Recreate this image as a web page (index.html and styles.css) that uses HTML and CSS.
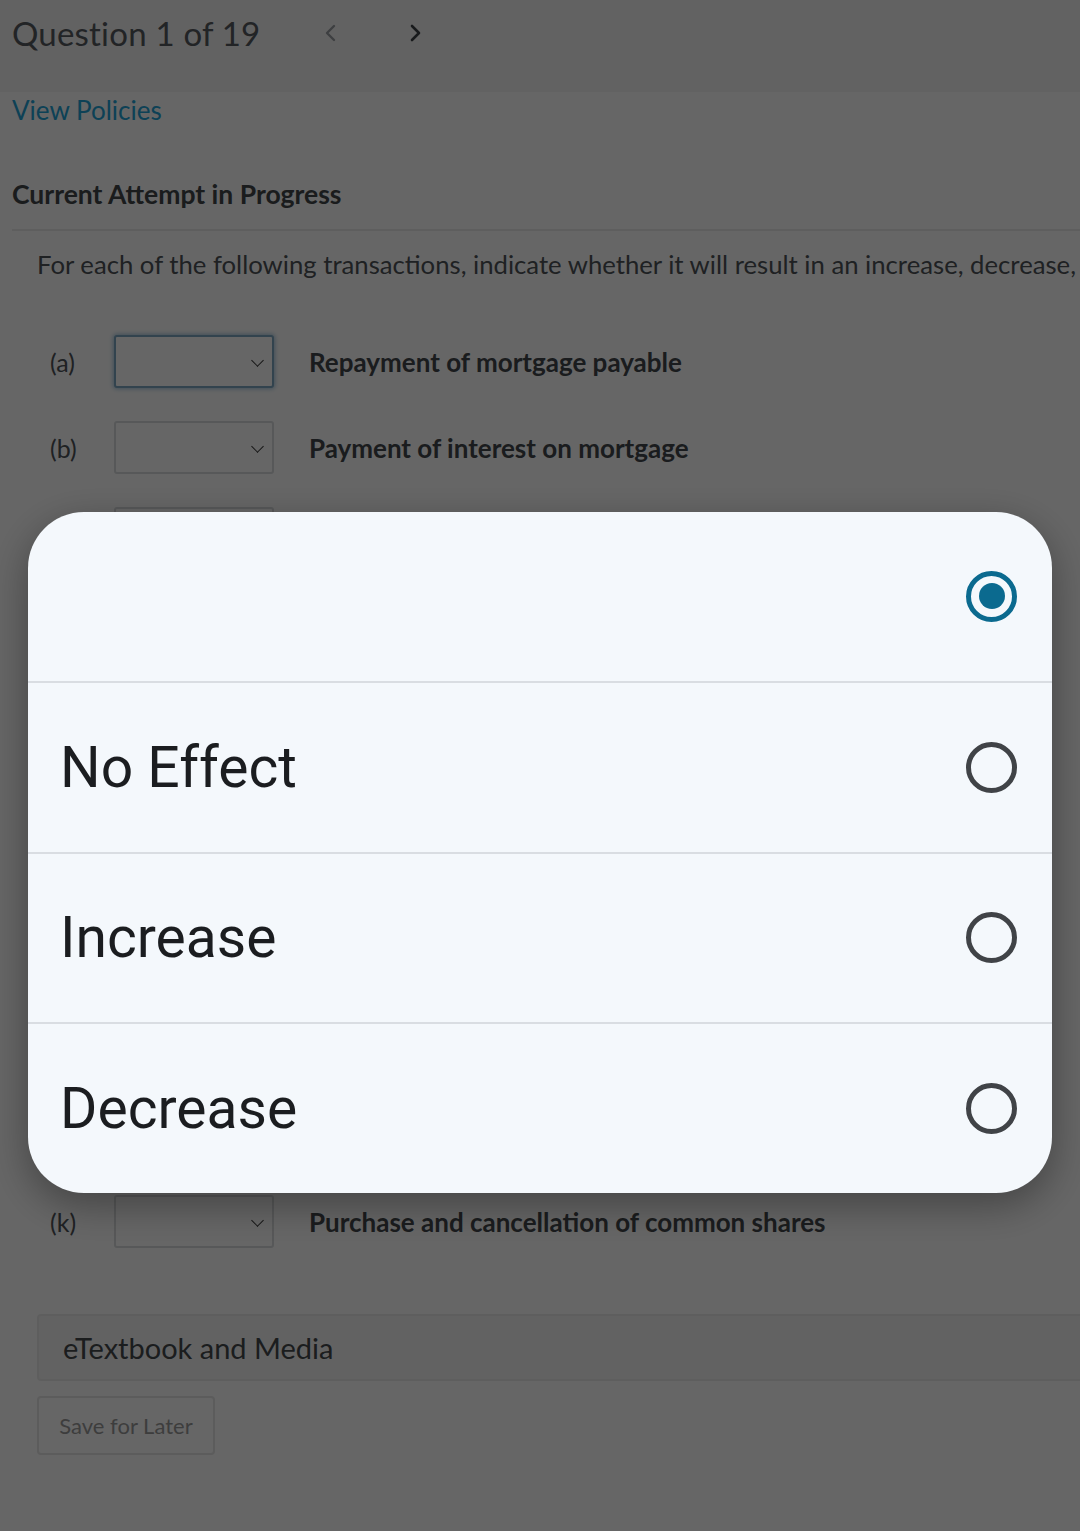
FILE: index.html
```html
<!DOCTYPE html>
<html lang="en">
<head>
<meta charset="utf-8">
<title>Question 1 of 19</title>
<link rel="stylesheet" href="styles.css">
</head>
<body>
<div class="page">
  <header class="topbar">
    <span class="q-title">Question 1 of 19</span>
    <span class="nav nav-prev"><svg width="14" height="18" viewBox="0 0 14 18"><path d="M10 2 L3 9 L10 16" fill="none" stroke="currentColor" stroke-width="2.4" stroke-linecap="round" stroke-linejoin="round"/></svg></span>
    <span class="nav nav-next"><svg width="14" height="18" viewBox="0 0 14 18"><path d="M4 2 L11 9 L4 16" fill="none" stroke="currentColor" stroke-width="2.6" stroke-linecap="round" stroke-linejoin="round"/></svg></span>
  </header>

  <div class="content">
    <a class="policies" href="#">View Policies</a>
    <h2 class="attempt">Current Attempt in Progress</h2>
    <div class="question">
      <p class="prompt">For each of the following transactions, indicate whether it will result in an increase, decrease, or no effect on the company's debt to total assets ratio.</p>
      <div class="rows">
        <div class="row"><span class="lbl">(a)</span><span class="sel focus"><i class="chev"></i></span><span class="desc">Repayment of mortgage payable</span></div>
        <div class="row"><span class="lbl">(b)</span><span class="sel"><i class="chev"></i></span><span class="desc">Payment of interest on mortgage</span></div>
        <div class="row"><span class="lbl">(c)</span><span class="sel"><i class="chev"></i></span><span class="desc"></span></div>
        <div class="row"><span class="lbl">(d)</span><span class="sel"><i class="chev"></i></span><span class="desc"></span></div>
        <div class="row"><span class="lbl">(e)</span><span class="sel"><i class="chev"></i></span><span class="desc"></span></div>
        <div class="row"><span class="lbl">(f)</span><span class="sel"><i class="chev"></i></span><span class="desc"></span></div>
        <div class="row"><span class="lbl">(g)</span><span class="sel"><i class="chev"></i></span><span class="desc"></span></div>
        <div class="row"><span class="lbl">(h)</span><span class="sel"><i class="chev"></i></span><span class="desc"></span></div>
        <div class="row"><span class="lbl">(i)</span><span class="sel"><i class="chev"></i></span><span class="desc"></span></div>
        <div class="row"><span class="lbl">(j)</span><span class="sel"><i class="chev"></i></span><span class="desc"></span></div>
        <div class="row"><span class="lbl">(k)</span><span class="sel"><i class="chev"></i></span><span class="desc">Purchase and cancellation of common shares</span></div>
      </div>
      <div class="media">eTextbook and Media</div>
      <button class="save">Save for Later</button>
    </div>
  </div>
</div>

<div class="overlay"></div>

<div class="dialog" role="listbox">
  <div class="opt"><span class="opt-text"></span><span class="radio on"></span></div>
  <div class="opt"><span class="opt-text">No Effect</span><span class="radio"></span></div>
  <div class="opt"><span class="opt-text">Increase</span><span class="radio"></span></div>
  <div class="opt"><span class="opt-text">Decrease</span><span class="radio"></span></div>
</div>
</body>
</html>
```

FILE: styles.css
```css
html, body {
  margin: 0;
  padding: 0;
  width: 1080px;
  height: 1531px;
  overflow: hidden;
  background: #ffffff;
}

.page {
  font-family: Lato, "Open Sans", sans-serif;
  color: #474b50;
  width: 1080px;
  overflow: hidden;
}

.topbar {
  height: 92px;
  background: #f5f5f5;
  display: flex;
  align-items: center;
  padding: 0 0 26px 12px;
  box-sizing: border-box;
}

.q-title {
  font-size: 33px;
  color: #555a60;
  letter-spacing: 0.2px;
}

.nav {
  display: flex;
  align-items: center;
}
.nav-prev {
  margin-left: 64px;
  color: #9a9ea3;
}
.nav-next {
  margin-left: 70px;
  color: #3e4246;
}

.content {
  padding: 0 0 0 12px;
}

.policies {
  display: block;
  margin-top: 2px;
  font-size: 26px;
  color: #22a4d6;
  text-decoration: none;
  line-height: 32px;
}

.attempt {
  margin: 52px 0 0 0;
  font-size: 26.5px;
  font-weight: 700;
  color: #424649;
  line-height: 32px;
  padding-bottom: 19px;
  border-bottom: 2px solid #eaeaea;
}

.question {
  padding-left: 25px;
  width: 1200px;
}

.prompt {
  margin: 17px 0 0 0;
  font-size: 25.7px;
  line-height: 32px;
  color: #4e5358;
  white-space: nowrap;
}

.rows {
  margin-top: 55px;
  display: flex;
  flex-direction: column;
  gap: 33px;
}

.row {
  display: flex;
  align-items: center;
  height: 53px;
}

.lbl {
  width: 77px;
  padding-left: 13px;
  box-sizing: border-box;
  font-size: 25px;
  color: #4e5358;
}

.sel {
  width: 160px;
  height: 53px;
  box-sizing: border-box;
  border: 2px solid #dadcde;
  border-radius: 3px;
  background: #ffffff;
  position: relative;
}
.sel.focus {
  border-color: #7da7c2;
  box-shadow: 0 0 4px 1px rgba(100, 160, 200, 0.6);
}
.chev {
  position: absolute;
  right: 10px;
  top: 19px;
  width: 8px;
  height: 8px;
  border-right: 1.5px solid #333;
  border-bottom: 1.5px solid #333;
  transform: rotate(45deg);
}

.desc {
  margin-left: 35px;
  font-size: 26px;
  font-weight: 700;
  color: #43474b;
  white-space: nowrap;
}

.media {
  margin-top: 66px;
  height: 67px;
  box-sizing: border-box;
  border: 2px solid #ececec;
  border-radius: 4px;
  background: #f5f5f5;
  display: flex;
  align-items: center;
  padding-left: 24px;
  font-size: 29px;
  color: #45494d;
}

.save {
  margin-top: 15px;
  height: 59px;
  width: 178px;
  border: 2px solid #e6e6e6;
  border-radius: 4px;
  background: #ffffff;
  font-family: Lato, "Open Sans", sans-serif;
  font-size: 22px;
  color: #9a9a9a;
  padding: 0;
}

.overlay {
  position: fixed;
  inset: 0;
  background: rgba(0, 0, 0, 0.6);
}

.dialog {
  position: fixed;
  left: 28px;
  top: 512px;
  width: 1024px;
  height: 681px;
  background: #f4f8fc;
  border-radius: 56px;
  overflow: hidden;
  display: flex;
  flex-direction: column;
  box-shadow: 0 12px 40px rgba(0, 0, 0, 0.35);
  font-family: Roboto, "Noto Sans", sans-serif;
}

.opt {
  flex: 1;
  display: flex;
  align-items: center;
  justify-content: space-between;
  padding: 0 35px 0 32px;
  border-top: 2px solid #d9dde2;
}
.opt:first-child {
  border-top: none;
}

.opt-text {
  font-size: 57px;
  color: #1b1d20;
}

.radio {
  width: 51px;
  height: 51px;
  box-sizing: border-box;
  border: 5px solid #404347;
  border-radius: 50%;
  display: flex;
  align-items: center;
  justify-content: center;
}
.radio.on {
  border-color: #0b6a8f;
}
.radio.on::after {
  content: "";
  width: 26px;
  height: 26px;
  border-radius: 50%;
  background: #0b6a8f;
}
```
